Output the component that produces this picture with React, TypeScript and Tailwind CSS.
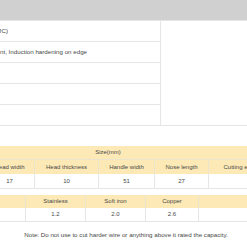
export default function App() {
  const infoRows = ["RC)", "nt, Induction hardening on edge", "", "", ""]

  const sizeCols = [
    { w: "w-[50px]", head: "Head width", val: "17" },
    { w: "w-[64px]", head: "Head thickness", val: "10" },
    { w: "w-[56px]", head: "Handle width", val: "51" },
    { w: "w-[54px]", head: "Nose length", val: "27" },
    { w: "w-[82px]", head: "Cutting edge length", val: "" },
  ]

  const capCols = [
    { w: "w-[60px]", head: "", val: "" },
    { w: "w-[60px]", head: "Stainless", val: "1.2" },
    { w: "w-[60px]", head: "Soft iron", val: "2.0" },
    { w: "w-[53px]", head: "Copper", val: "2.6" },
    { w: "w-[80px]", head: "", val: "" },
  ]

  return (
    <div className="w-[247px] h-[247px] overflow-hidden bg-white font-['Liberation_Sans',sans-serif] text-[6px] text-[#484848]">
      {/* spec table */}
      <div className="h-[20px] bg-[#d0d0d0]" />
      <div className="flex h-[105px]">
        <div className="w-[161px] flex flex-col border-r border-[#e6e6e6] text-[6.2px]">
          {infoRows.map((t, i) => (
            <div key={i} className="h-[21px] flex items-center border-t border-[#e6e6e6] whitespace-nowrap overflow-hidden">
              <span className={i === 0 ? "-ml-[3px]" : "ml-0"}>{t}</span>
            </div>
          ))}
        </div>
        <div className="flex-1 border-t border-[#e6e6e6]" />
      </div>
      <div className="border-t border-[#e6e6e6]" />

      {/* size table */}
      <div className="mt-[20px]">
        <div className="h-[14px] flex items-center justify-center pr-[31px] bg-[#fde9b6] border-b border-[#ece4cf]">
          Size(mm)
        </div>
        <div className="flex -ml-[15px] h-[14px] bg-[#fde9b6]">
          {sizeCols.map((c, i) => (
            <div key={i} className={`${c.w} shrink-0 flex items-center justify-center whitespace-nowrap border-r border-[#ece4cf]`}>
              {c.head}
            </div>
          ))}
        </div>
        <div className="flex -ml-[15px] h-[15px] border-b border-[#e6e6e6]">
          {sizeCols.map((c, i) => (
            <div key={i} className={`${c.w} shrink-0 flex items-center justify-center border-r border-[#e6e6e6]`}>
              {c.val}
            </div>
          ))}
        </div>
      </div>

      {/* capacity table */}
      <div className="mt-[6px]">
        <div className="flex -ml-[34px] h-[13px] bg-[#fde9b6]">
          {capCols.map((c, i) => (
            <div key={i} className={`${c.w} shrink-0 flex items-center justify-center whitespace-nowrap border-r border-[#ece4cf]`}>
              {c.head}
            </div>
          ))}
        </div>
        <div className="flex -ml-[34px] h-[14px] border-b border-[#e6e6e6]">
          {capCols.map((c, i) => (
            <div key={i} className={`${c.w} shrink-0 flex items-center justify-center border-r border-[#e6e6e6]`}>
              {c.val}
            </div>
          ))}
        </div>
        <div className="h-[26px] flex items-center justify-center pl-[5px] whitespace-nowrap text-[6.2px]">
          Note: Do not use to cut harder wire or anything above it rated the capacity.
        </div>
      </div>
    </div>
  )
}
